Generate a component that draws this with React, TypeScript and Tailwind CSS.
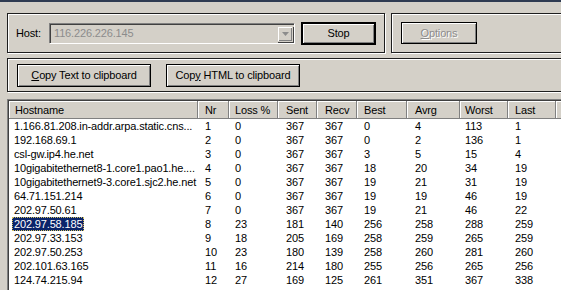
import React from "react";

const cols = [
  { w: 189, pl: 3 },
  { w: 31, pl: 7 },
  { w: 49, pl: 6 },
  { w: 39, pl: 8 },
  { w: 40, pl: 8 },
  { w: 50, pl: 7 },
  { w: 53, pl: 8 },
  { w: 48, pl: 5 },
  { w: 48, pl: 7 },
];

const headers = ["Hostname", "Nr", "Loss %", "Sent", "Recv", "Best", "Avrg", "Worst", "Last"];

const rows: (string | number)[][] = [
  ["1.166.81.208.in-addr.arpa.static.cns...", 1, 0, 367, 367, 0, 4, 113, 1],
  ["192.168.69.1", 2, 0, 367, 367, 0, 2, 136, 1],
  ["csl-gw.ip4.he.net", 3, 0, 367, 367, 3, 5, 15, 4],
  ["10gigabitethernet8-1.core1.pao1.he....", 4, 0, 367, 367, 18, 20, 34, 19],
  ["10gigabitethernet9-3.core1.sjc2.he.net", 5, 0, 367, 367, 19, 21, 31, 19],
  ["64.71.151.214", 6, 0, 367, 367, 19, 19, 46, 19],
  ["202.97.50.61", 7, 0, 367, 367, 19, 21, 46, 22],
  ["202.97.58.185", 8, 23, 181, 140, 256, 258, 288, 259],
  ["202.97.33.153", 9, 18, 205, 169, 258, 259, 265, 259],
  ["202.97.50.253", 10, 23, 180, 139, 258, 260, 281, 260],
  ["202.101.63.165", 11, 16, 214, 180, 255, 256, 265, 256],
  ["124.74.215.94", 12, 27, 169, 125, 261, 351, 367, 338],
];

const raised =
  "border border-black shadow-[inset_1px_1px_0_#ffffff,inset_-1px_-1px_0_#808080]";
const groupBox =
  "border border-[#1e1e1e] shadow-[inset_1px_1px_0_#ffffff,1px_1px_0_#ffffff]";

export default function App() {
  return (
    <div
      className="w-[561px] h-[290px] overflow-hidden bg-[#d4d0c8] text-[11px] tracking-[-0.15px] text-black"
      style={{ fontFamily: '"Liberation Sans", Arial, sans-serif' }}
    >
      <div className="h-[2px] bg-[#2f3b52]" />
      {/* top groups */}
      <div className="flex mt-[11px] ml-[7px] gap-[6px]">
        <div className={`${groupBox} w-[378px] h-[40px] flex items-center shrink-0`}>
          <span className="ml-[8px] w-[33px]">Host:</span>
          <div className="w-[245px] h-[20px] border-t border-l border-[#808080] shadow-[inset_1px_1px_0_#404040,1px_1px_0_#ffffff] flex items-center bg-[#d4d0c8]">
            <span className="ml-[4px] text-[#8c8c8c] flex-1">116.226.226.145</span>
            <div className="w-[16px] h-[16px] mr-[1px] border border-[#d4d0c8] shadow-[inset_1px_1px_0_#ffffff,inset_-1px_-1px_0_#808080,1px_1px_0_#404040] flex items-center justify-center">
              <svg width="7" height="4" viewBox="0 0 7 4">
                <polygon points="0,0 7,0 3.5,4" fill="#8c8c8c" />
              </svg>
            </div>
          </div>
          <div className="ml-[7px] w-[75px] h-[23px] border-2 border-black shadow-[inset_1px_1px_0_#ffffff,inset_-1px_-1px_0_#808080] flex items-center justify-center">
            Stop
          </div>
        </div>
        <div className={`${groupBox} w-[200px] h-[40px] flex items-center shrink-0`}>
          <div className={`${raised} ml-[9px] w-[76px] h-[22px] flex items-center justify-center text-[#8c8c8c] [text-shadow:1px_1px_0_#ffffff]`}>
            <span><span className="underline">O</span>ptions</span>
          </div>
        </div>
      </div>
      {/* copy buttons group */}
      <div className={`${groupBox} mt-[5px] ml-[7px] w-[600px] h-[34px] flex items-center`}>
        <div className={`${raised} ml-[9px] w-[134px] h-[23px] flex items-center justify-center`}>
          <span><span className="underline">C</span>opy Text to clipboard</span>
        </div>
        <div className={`${raised} ml-[15px] w-[134px] h-[23px] flex items-center justify-center`}>
          <span>Cop<span className="underline">y</span> HTML to clipboard</span>
        </div>
      </div>
      {/* list view */}
      <div className="mt-[7px] ml-[7px] w-[600px] h-[300px] border-t border-l border-[#808080] bg-white">
        <div className="border-t border-l border-[#404040] h-full">
          <div className="flex h-[18px] bg-[#d4d0c8] border-b border-[#808080]">
            {headers.map((h, i) => (
              <div
                key={h}
                className="h-full flex items-center pt-[2px] shrink-0 border-r border-[#808080] shadow-[inset_1px_1px_0_#ffffff]"
                style={{ width: cols[i].w, paddingLeft: i === 0 ? 6 : cols[i].pl }}
              >
                {h}
              </div>
            ))}
            <div className="flex-1 h-full shadow-[inset_1px_1px_0_#ffffff]" />
          </div>
          {rows.map((r, ri) => (
            <div key={ri} className="flex h-[14px] leading-[14px]">
              {r.map((c, ci) => (
                <div
                  key={ci}
                  className="shrink-0 whitespace-nowrap overflow-hidden"
                  style={{ width: cols[ci].w, paddingLeft: cols[ci].pl }}
                >
                  {ci === 0 ? (
                    <span
                      className={
                        ri === 7
                          ? "inline-block px-[2px] bg-[#0a246a] text-white outline-1 outline-dotted outline-offset-[-1px] outline-[#d0c060]"
                          : "inline-block px-[2px]"
                      }
                    >
                      {c}
                    </span>
                  ) : (
                    c
                  )}
                </div>
              ))}
            </div>
          ))}
        </div>
      </div>
    </div>
  );
}
